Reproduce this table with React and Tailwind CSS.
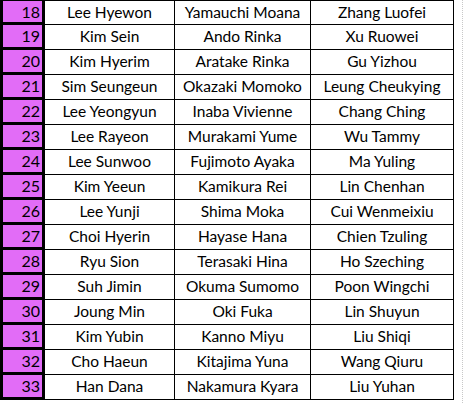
const rows = [
  [18, "Lee Hyewon", "Yamauchi Moana", "Zhang Luofei"],
  [19, "Kim Sein", "Ando Rinka", "Xu Ruowei"],
  [20, "Kim Hyerim", "Aratake Rinka", "Gu Yizhou"],
  [21, "Sim Seungeun", "Okazaki Momoko", "Leung Cheukying"],
  [22, "Lee Yeongyun", "Inaba Vivienne", "Chang Ching"],
  [23, "Lee Rayeon", "Murakami Yume", "Wu Tammy"],
  [24, "Lee Sunwoo", "Fujimoto Ayaka", "Ma Yuling"],
  [25, "Kim Yeeun", "Kamikura Rei", "Lin Chenhan"],
  [26, "Lee Yunji", "Shima Moka", "Cui Wenmeixiu"],
  [27, "Choi Hyerin", "Hayase Hana", "Chien Tzuling"],
  [28, "Ryu Sion", "Terasaki Hina", "Ho Szeching"],
  [29, "Suh Jimin", "Okuma Sumomo", "Poon Wingchi"],
  [30, "Joung Min", "Oki Fuka", "Lin Shuyun"],
  [31, "Kim Yubin", "Kanno Miyu", "Liu Shiqi"],
  [32, "Cho Haeun", "Kitajima Yuna", "Wang Qiuru"],
  [33, "Han Dana", "Nakamura Kyara", "Liu Yuhan"],
];

export default function App() {
  return (
    <div
      className="flex w-[464px] h-[403px] bg-white overflow-hidden text-black"
      style={{ fontFamily: "Lato, 'Open Sans', sans-serif" }}
    >
      <div className="flex flex-col w-[454px]">
        {rows.map(([no, korea, japan, china], i) => (
          <div
            key={no}
            className={`flex h-[25px] shrink-0 ${i === 0 ? "border-t border-black" : ""}`}
          >
            <div className="w-[45px] shrink-0 bg-[#e26cf7] border-x-[3px] border-b-[3px] border-black flex items-center justify-end pr-[2px] text-[16px] leading-none">
              {no}
            </div>
            <div className="w-[130px] shrink-0 border-b border-r border-black flex items-center justify-center text-[15.5px] leading-none">
              {korea}
            </div>
            <div className="w-[136px] shrink-0 border-b border-r border-black flex items-center justify-center text-[15.5px] leading-none">
              {japan}
            </div>
            <div className="w-[143px] shrink-0 border-b border-r border-black flex items-center justify-center text-[15.5px] leading-none whitespace-nowrap">
              {china}
            </div>
          </div>
        ))}
      </div>
      <div className="w-[9px] shrink-0 border-r border-dotted border-[#c8c8c8]" />
    </div>
  );
}
